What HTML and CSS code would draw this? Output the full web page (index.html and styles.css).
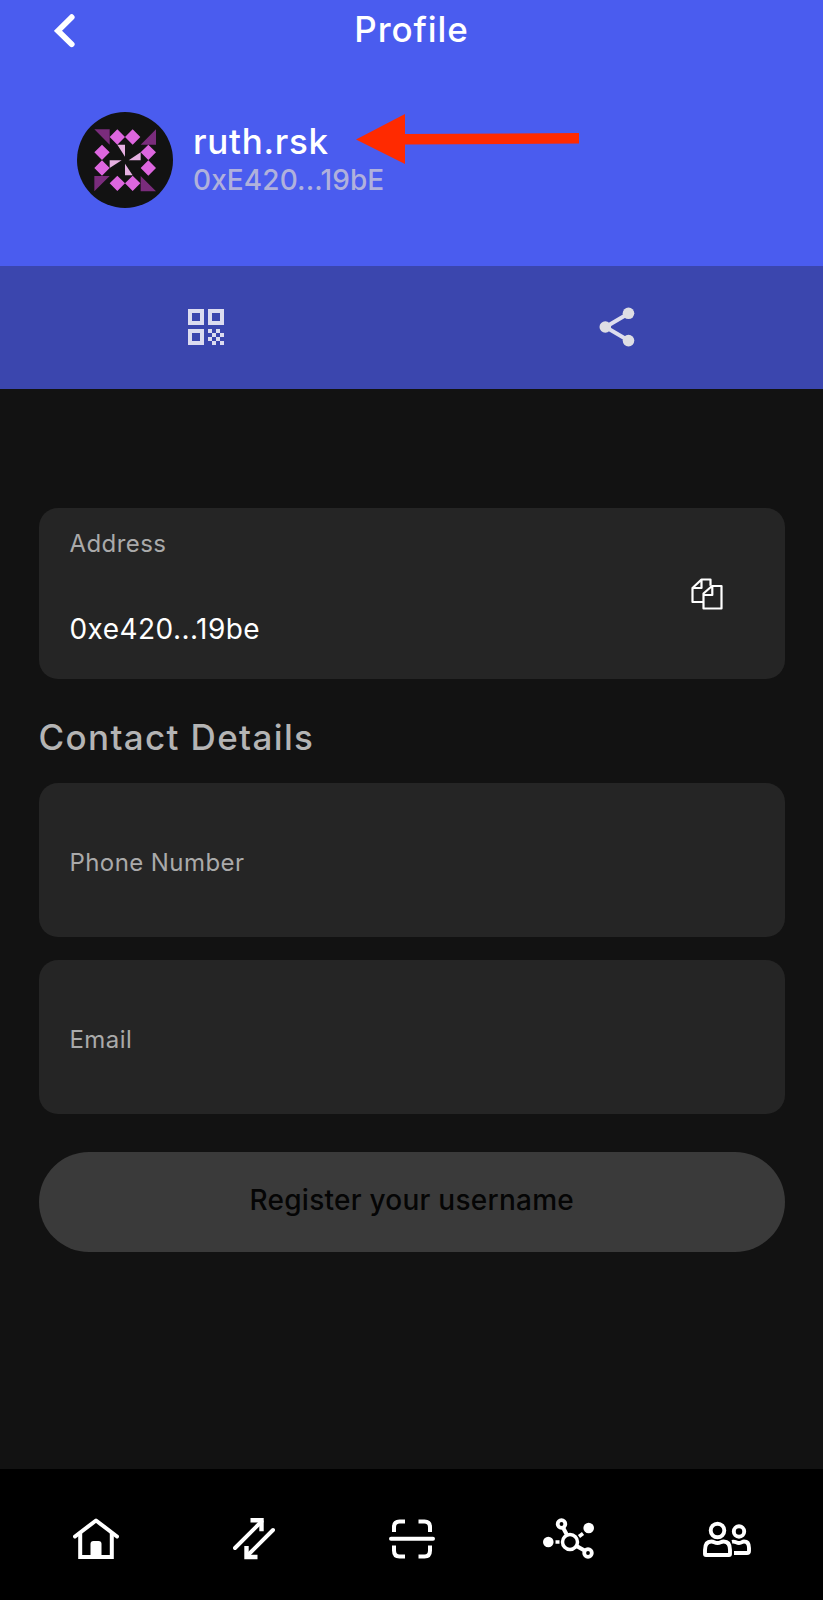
FILE: index.html
```html
<!DOCTYPE html>
<html lang="en">
<head>
<meta charset="utf-8">
<title>Profile</title>
<link rel="stylesheet" href="styles.css">
</head>
<body>
<div class="screen">
  <header class="header">
    <div class="titlebar">
      <svg class="back" viewBox="0 0 22 34"><path d="M17.7 3.2 4 16.8 17.7 30.2" fill="none" stroke="#fff" stroke-width="5.8" stroke-linecap="round"/></svg>
      <h1 class="title"><span>Profile</span></h1>
    </div>
    <div class="identity">
      <svg class="avatar" viewBox="0 0 288 288">
        <circle cx="144" cy="144" r="144" fill="#121212"/>
        <path fill="#7a2c7c" d="M52 52h46v46zM237 52v46h-46zM52 192h46l-46 46zM191 192l46 46h-46z"/>
        <path fill="#dd66df" d="M121 52l23 23-23 23-23-23zM167 52l23 23-23 23-23-23zM75 98l23 23-23 23-23-23zM75 145l23 23-23 23-23-23zM214 98l23 23-23 23-23-23zM214 145l23 23-23 23-23-23zM121 191l23 23-23 23-23-23zM167 191l23 23-23 23-23-23z"/>
        <path fill="#e6b0e2" d="M121 98h23v36zM191 121v24h-36zM98 145h36l-36 23zM144 155l23 35h-23z"/>
      </svg>
      <div class="names">
        <div class="username">ruth.rsk</div>
        <div class="short-address">0xE420...19bE</div>
      </div>
      <svg class="pointer" viewBox="0 0 223 50"><path fill="#ff2a00" d="M0 25.5 49 0v20l174-1v10.5l-174 1V50z"/></svg>
    </div>
  </header>
  <div class="actions">
    <svg class="qr" viewBox="0 0 18 18" fill="#dcdcf0"><path fill-rule="evenodd" d="M0 0h8v8H0zM2 2v4h4V2zM10 0h8v8h-8zM12 2v4h4V2zM0 10h8v8H0zM2 12v4h4v-4zM10 10h2v2h-2zM14 10h2v2h-2zM12 12h2v2h-2zM16 12h2v2h-2zM10 14h2v2h-2zM14 14h2v2h-2zM12 16h2v2h-2zM16 16h2v2h-2z"/></svg>
    <svg class="share" viewBox="0 0 36 40"><path d="M29.5 6.5 6.5 20l23 13.5" fill="none" stroke="#dedeee" stroke-width="4"/><g fill="#dedee4"><circle cx="29.5" cy="6.3" r="5.8"/><circle cx="6.3" cy="20" r="5.8"/><circle cx="29.5" cy="33.6" r="5.8"/></g></svg>
  </div>
  <main class="content">
    <section class="card address-card">
      <div class="address-text">
        <div class="label">Address</div>
        <div class="value">0xe420...19be</div>
      </div>
      <svg class="copy" viewBox="0 0 32 32" fill="none" stroke="#fff" stroke-width="2.2" stroke-linejoin="round"><path d="M12 24H1.500V10L10.500 1.500h9v6.300M10.500 1.500v8.500h-9"/><path d="M12.500 15.500 21 8h9.500v22.500h-18zM21.300 8v9h-8.800"/></svg>
    </section>
    <h2 class="section-title">Contact Details</h2>
    <div class="card field"><span class="label">Phone Number</span></div>
    <div class="card field"><span class="label">Email</span></div>
    <button class="register">Register your username</button>
  </main>
  <nav class="tabs">
    <svg class="tab-home" viewBox="0 0 46 42" fill="none" stroke="#fff"><path d="M2 18.5 23 2.500l21 16" stroke-width="4" stroke-linecap="round" stroke-linejoin="round"/><path d="M7.200 15v24h31.600V15" stroke-width="4"/><path d="M17.500 40V26q0-3 3-3h5q3 0 3 3v14z" fill="#fff" stroke="none"/></svg>
    <svg class="tab-swap" viewBox="0 0 42 42" fill="none" stroke="#fff" stroke-width="4"><path d="M2 30 28.500 3.500" stroke-linecap="round"/><path d="M17.500 2.300h11v11" stroke-width="4.400"/><path d="M40 12 14 38" stroke-linecap="round"/><path d="M13.500 28v11h11" stroke-width="4.400"/></svg>
    <svg class="tab-scan" viewBox="0 0 46 42" fill="none" stroke="#fff" stroke-width="4"><path d="M5 14V9q0-5.500 5.500-5.500H16M29.500 3.500h6q5.500 0 5.500 5.500V14M5 27.500v5q0 6 5.500 6H16M29.500 38.500h6q5.500 0 5.500-6v-5"/><path d="M2 20.800h42" stroke-linecap="round"/></svg>
    <svg class="tab-network" viewBox="0 0 52 42" fill="none" stroke="#fff"><circle cx="18.500" cy="6" r="3.800" stroke-width="3.800"/><circle cx="45" cy="35" r="3.800" stroke-width="3.800"/><circle cx="27" cy="24" r="7.500" stroke-width="3.500"/><path d="M20.500 10.500 24 17M33.500 28l8 4.500" stroke-width="4"/><path d="M12.500 24h4M36 18.500l4-3" stroke-width="3.500"/><g fill="#fff" stroke="none"><circle cx="5.300" cy="24" r="5.300"/><circle cx="45.700" cy="10" r="5.300"/></g></svg>
    <svg class="tab-people" viewBox="0 0 48 36" fill="none" stroke="#fff" stroke-width="3.900"><circle cx="14.500" cy="9.500" r="6.800"/><path d="M2 33V29q0-8.500 6.300-8.500c3 0 3 1.500 6.200 1.500s3.200-1.500 6.200-1.500q6.300 0 6.300 8.500v4q0 1-1 1H3q-1 0-1-1z"/><circle cx="36" cy="10.500" r="5.200"/><path d="M29 20.800c3.500-.8 4 1.200 7 1.200s3-1.500 5-1.500q5 0 5 6.500v3q0 2-2 2H31"/></svg>
  </nav>
</div>
</body>
</html>
```
FILE: styles.css
```css
* { box-sizing: border-box; }
body {
  margin: 0;
  background: #121212;
  font-family: Inter, "Liberation Sans", sans-serif;
}
svg { display: block; flex: none; }
.screen { width: 823px; height: 1600px; display: flex; flex-direction: column; }

.header { height: 266px; background: #4a5cef; color: #fff; }
.titlebar { display: grid; grid-template-columns: 112px 1fr 112px; height: 60px; }
.back { width: 22px; height: 34px; margin: 14px 0 0 54px; }
.title { margin: 0; font-size: 35px; font-weight: 500; line-height: 58px; text-align: center; letter-spacing: 0.9px; }

.identity { display: flex; padding: 52px 0 0 77px; }
.avatar { width: 96px; height: 96px; }
.names { width: 184px; margin-left: 20px; padding-top: 9px; white-space: nowrap; }
.username { font-size: 35px; font-weight: 500; line-height: 40px; letter-spacing: 0.7px; }
.short-address { padding-top: 1px; font-size: 28px; font-weight: 500; line-height: 36px; letter-spacing: 0.1px; color: #b0b1dc; }
.pointer { width: 223px; height: 50px; margin: 2px 0 0 -21px; }

.actions { height: 123px; background: #3b46ae; display: grid; grid-template-columns: 1fr 1fr; padding: 0 1px 2px 0; }
.actions svg { place-self: center; }
.qr { width: 36px; height: 36px; }
.share { width: 36px; height: 40px; }

.content { flex: 1; padding: 119px 38px 0 38.5px; }
.card { background: #252525; border-radius: 19px; padding: 0 31px; }
.address-card { height: 171px; display: flex; justify-content: space-between; align-items: center; padding-right: 62px; }
.address-text { height: 100%; padding-top: 20px; }
.label { font-size: 24px; line-height: 32px; letter-spacing: 0.42px; color: #aaa; }
.value { font-size: 28px; line-height: 36px; letter-spacing: 0.45px; margin-top: 51px; color: #fff; }
.copy { width: 32px; height: 32px; margin-top: 1px; }
.section-title { margin: 33px 0 20.5px; font-size: 35px; font-weight: 500; line-height: 50px; letter-spacing: 1.35px; color: #b4b4b4; }
.field { height: 154px; display: flex; align-items: center; padding-top: 6px; }
.field + .field { margin-top: 23px; }
.register {
  display: block; width: 100%; height: 100px; margin-top: 38.5px; padding: 0 0 4px;
  border: 0; border-radius: 50px; background: #3a3a3a; color: #050505;
  font-family: inherit; font-size: 28px; font-weight: 500; letter-spacing: 0.25px;
}

.tabs { height: 131px; background: #000; display: flex; align-items: center; padding: 8px 0 0 73px; }
.tab-home { width: 46px; height: 42px; }
.tab-swap { width: 42px; height: 42px; margin-left: 114px; }
.tab-scan { width: 46px; height: 42px; margin-left: 114px; }
.tab-network { width: 52px; height: 42px; margin-left: 108px; }
.tab-people { width: 48px; height: 36px; margin-left: 108px; }
```
